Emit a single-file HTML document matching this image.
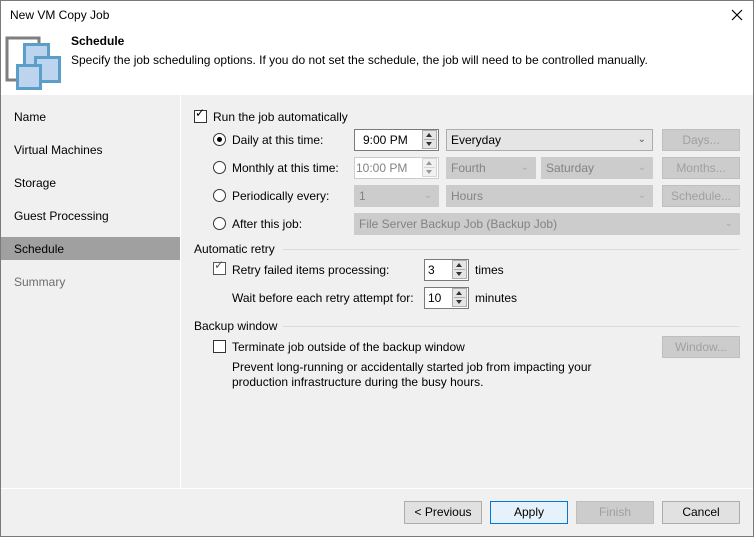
<!DOCTYPE html>
<html><head><style>
*{box-sizing:border-box;margin:0;padding:0}
body{width:754px;height:537px;background:#f0f0f0;font-family:"Liberation Sans",sans-serif;font-size:12px;color:#000;position:relative;overflow:hidden}
.a{position:absolute;white-space:nowrap}
.box{position:absolute;border:1px solid #7a7a7a;background:#fff}
.dis{position:absolute;border:1px solid #ccc;background:#cccccc;color:#838383;padding-left:4px;line-height:20px}
.cmb{position:absolute;border:1px solid #adadad;background:#e5e5e5;padding-left:4px;line-height:20px}
.btn{position:absolute;border:1px solid #adadad;background:#e1e1e1;text-align:center;line-height:20px}
.btnd{position:absolute;border:1px solid #bfbfbf;background:#cccccc;color:#a0a0a0;text-align:center;line-height:20px}
.chk{position:absolute;width:13px;height:13px;border:1px solid #333;background:#fff}
.rad{position:absolute;width:13px;height:13px;border:1px solid #333;border-radius:50%;background:#fff}
.arr{position:absolute;right:6px;top:0;color:#555;font-size:10px}
.spin{position:absolute;width:15px;height:19px;border:1px solid #adadad;background:#e5e5e5}
.spin:before{content:"";position:absolute;left:3px;top:2px;border:3px solid transparent;border-bottom:4px solid #333;border-top:0}
.spin:after{content:"";position:absolute;left:3px;bottom:2px;border:3px solid transparent;border-top:4px solid #333;border-bottom:0}
.spin i{position:absolute;left:1px;right:1px;top:8px;height:1px;background:#adadad}
.line{position:absolute;height:1px;background:#dcdcdc}
</style></head><body>
<div class="a" style="left:0;top:0;width:754px;height:95px;background:#fff"></div>
<div class="a" style="left:0;top:0;width:754px;height:537px;border:1px solid #7a7a7a"></div>
<div class="a" style="left:10px;top:8px">New VM Copy Job</div>
<svg class="a" style="left:731px;top:9px" width="12" height="12"><path d="M1 1L11 11M11 1L1 11" stroke="#000" stroke-width="1.2"/></svg>
<svg class="a" style="left:0;top:30px" width="70" height="65">
<path d="M39 14V8H7V50H17" stroke="#7f7f7f" stroke-width="3" fill="none"/>
<rect x="23" y="13" width="27" height="27" fill="#5b9fc8"/><rect x="26" y="16" width="21" height="21" fill="#bcd4ee"/>
<rect x="34" y="26" width="27" height="27" fill="#5b9fc8"/><rect x="37" y="29" width="21" height="21" fill="#bcd4ee"/>
<rect x="16" y="34" width="26" height="26" fill="#5b9fc8"/><rect x="19" y="37" width="20" height="20" fill="#bcd4ee"/>
</svg>
<div class="a" style="left:71px;top:34px;font-weight:bold">Schedule</div>
<div class="a" style="left:71px;top:53px">Specify the job scheduling options. If you do not set the schedule, the job will need to be controlled manually.</div>
<div class="a" style="left:180px;top:95px;width:1px;height:393px;background:#fff"></div>
<div class="a" style="left:1px;top:237px;width:179px;height:23px;background:#a0a0a0"></div>
<div class="a" style="left:14px;top:110px">Name</div>
<div class="a" style="left:14px;top:143px">Virtual Machines</div>
<div class="a" style="left:14px;top:176px">Storage</div>
<div class="a" style="left:14px;top:209px">Guest Processing</div>
<div class="a" style="left:14px;top:242px">Schedule</div>
<div class="a" style="left:14px;top:275px;color:#6d6d6d">Summary</div>

<div class="chk" style="left:194px;top:110px"></div><div class="a" style="left:195px;top:106px;font-size:12px">✓</div>
<div class="a" style="left:213px;top:110px">Run the job automatically</div>
<div class="rad" style="left:213px;top:133px"></div><div class="a" style="left:217px;top:137px;width:5px;height:5px;border-radius:50%;background:#000"></div>
<div class="a" style="left:232px;top:133px">Daily at this time:</div>
<div class="rad" style="left:213px;top:161px"></div><div class="a" style="left:232px;top:161px">Monthly at this time:</div>
<div class="rad" style="left:213px;top:189px"></div><div class="a" style="left:232px;top:189px">Periodically every:</div>
<div class="rad" style="left:213px;top:217px"></div><div class="a" style="left:232px;top:217px">After this job:</div>

<div class="box" style="left:354px;top:129px;width:85px;height:22px;padding-left:8px;line-height:20px">9:00 PM</div>
<div class="spin" style="left:422px;top:130px"><i></i></div>
<div class="cmb" style="left:446px;top:129px;width:207px;height:22px">Everyday<span class="arr">&#8964;</span></div>
<div class="btnd" style="left:662px;top:129px;width:78px;height:22px">Days...</div>

<div class="box" style="left:354px;top:157px;width:85px;height:22px;padding-left:1px;line-height:20px;border-color:#ccc;color:#838383">10:00 PM</div>
<div class="spin" style="left:422px;top:158px;opacity:.5"><i></i></div>
<div class="dis" style="left:446px;top:157px;width:90px;height:22px">Fourth<span class="arr" style="color:#aaa">&#8964;</span></div>
<div class="dis" style="left:541px;top:157px;width:112px;height:22px">Saturday<span class="arr" style="color:#aaa">&#8964;</span></div>
<div class="btnd" style="left:662px;top:157px;width:78px;height:22px">Months...</div>

<div class="dis" style="left:354px;top:185px;width:85px;height:22px">1<span class="arr" style="color:#aaa">&#8964;</span></div>
<div class="dis" style="left:446px;top:185px;width:207px;height:22px">Hours<span class="arr" style="color:#aaa">&#8964;</span></div>
<div class="btnd" style="left:662px;top:185px;width:78px;height:22px">Schedule...</div>
<div class="dis" style="left:354px;top:213px;width:386px;height:22px">File Server Backup Job (Backup Job)<span class="arr" style="color:#aaa">&#8964;</span></div>

<div class="a" style="left:194px;top:242px">Automatic retry</div><div class="line" style="left:283px;top:249px;width:457px"></div>
<div class="chk" style="left:213px;top:262px;border-color:#555"></div><div class="a" style="left:214px;top:258px;color:#555">✓</div>
<div class="a" style="left:232px;top:263px">Retry failed items processing:</div>
<div class="box" style="left:424px;top:259px;width:45px;height:22px;padding-left:3px;line-height:20px">3</div>
<div class="spin" style="left:452px;top:260px"><i></i></div>
<div class="a" style="left:475px;top:263px">times</div>
<div class="a" style="left:232px;top:291px">Wait before each retry attempt for:</div>
<div class="box" style="left:424px;top:287px;width:45px;height:22px;padding-left:3px;line-height:20px">10</div>
<div class="spin" style="left:452px;top:288px"><i></i></div>
<div class="a" style="left:475px;top:291px">minutes</div>

<div class="a" style="left:194px;top:319px">Backup window</div><div class="line" style="left:283px;top:326px;width:457px"></div>
<div class="chk" style="left:213px;top:340px"></div>
<div class="a" style="left:232px;top:340px">Terminate job outside of the backup window</div>
<div class="btnd" style="left:662px;top:336px;width:78px;height:22px">Window...</div>
<div class="a" style="left:232px;top:360px">Prevent long-running or accidentally started job from impacting your</div>
<div class="a" style="left:232px;top:375px">production infrastructure during the busy hours.</div>

<div class="a" style="left:1px;top:488px;width:752px;height:1px;background:#fff"></div>
<div class="btn" style="left:404px;top:501px;width:78px;height:23px">&lt; Previous</div>
<div class="btn" style="left:490px;top:501px;width:78px;height:23px;border-color:#0078d7;background:#e5f1fb">Apply</div>
<div class="btnd" style="left:576px;top:501px;width:78px;height:23px">Finish</div>
<div class="btn" style="left:662px;top:501px;width:78px;height:23px">Cancel</div>
</body></html>
